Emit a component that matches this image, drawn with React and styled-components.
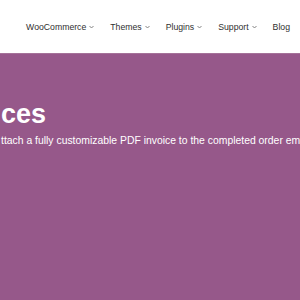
import React from "react";
import styled, { createGlobalStyle } from "styled-components";

const Global = createGlobalStyle`
  html, body { margin: 0; padding: 0; height: 100%; background: #96588a; }
  #root { min-height: 100%; display: flex; flex-direction: column; }
  * { box-sizing: border-box; }
`;

const Page = styled.div`
  flex: 1;
  display: flex;
  flex-direction: column;
  min-height: 300px;
  overflow: hidden;
`;

const Header = styled.header`
  height: 53px;
  background: #ffffff;
  display: flex;
  align-items: center;
  justify-content: flex-end;
  padding-right: 10px;
`;

const Nav = styled.nav`
  display: flex;
  align-items: center;
  gap: 16px;
`;

const NavItem = styled.a`
  display: flex;
  align-items: center;
  gap: 3px;
  font-family: "Liberation Sans", Arial, sans-serif;
  font-size: 8.7px;
  color: #2f2f2f;
  text-decoration: none;
  white-space: nowrap;
`;

const Chevron = () => (
  <svg width="5" height="4" viewBox="0 0 5 4" fill="none">
    <polyline points="0.5,1 2.5,3 4.5,1" stroke="#777777" strokeWidth="0.9" />
  </svg>
);

const Hero = styled.section`
  flex: 1;
  background: #96588a;
  border-top: 1px solid #a57299;
  padding-top: 43px;
  color: #ffffff;
  overflow: hidden;
`;

const Title = styled.h1`
  margin: 0 0 3px 1px;
  font-family: "Liberation Sans", Arial, sans-serif;
  font-weight: 700;
  font-size: 27px;
  line-height: 34px;
  white-space: nowrap;
`;

const Lead = styled.p`
  margin: 0 0 0 1px;
  font-family: "Liberation Sans", Arial, sans-serif;
  font-size: 10.4px;
  line-height: 14px;
  white-space: nowrap;
`;

const items = [
  { label: "WooCommerce", menu: true },
  { label: "Themes", menu: true },
  { label: "Plugins", menu: true },
  { label: "Support", menu: true },
  { label: "Blog", menu: false },
];

export default function App() {
  return (
    <>
      <Global />
      <Page>
        <Header>
          <Nav>
            {items.map((it) => (
              <NavItem key={it.label} href="#">
                {it.label}
                {it.menu && <Chevron />}
              </NavItem>
            ))}
          </Nav>
        </Header>
        <Hero>
          <Title>ces</Title>
          <Lead>ttach a fully customizable PDF invoice to the completed order email</Lead>
        </Hero>
      </Page>
    </>
  );
}
